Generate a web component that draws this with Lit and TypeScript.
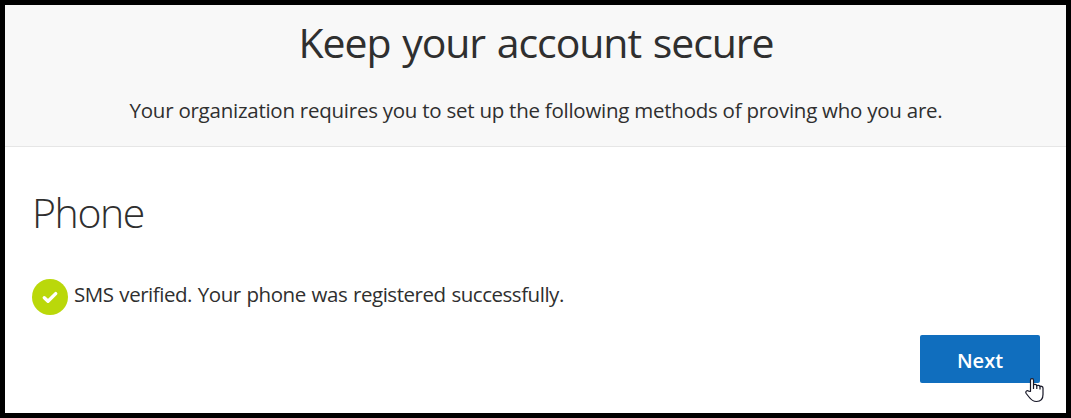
import { LitElement, html, css } from "lit";
import { customElement } from "lit/decorators.js";

@customElement("app-root")
class AppRoot extends LitElement {
  static styles = css`
    :host { display: block; font-family: "Open Sans", "Noto Sans", sans-serif; color: #2f2f2f; }
    .frame { box-sizing: border-box; width: 1071px; height: 418px; border: 5px solid #000; background: #fff; position: relative; overflow: hidden; }
    .head { box-sizing: border-box; height: 142px; background: #f8f8f8; border-bottom: 1px solid #e6e6e6; text-align: center; padding: 9px 0 0 1px; }
    h1, h2, p { margin: 0; font-weight: 400; white-space: nowrap; }
    h1 { font-size: 41px; line-height: 56px; letter-spacing: -1.04px; word-spacing: 2px; }
    .lead { font-size: 20.5px; line-height: 28px; margin-top: 26px; letter-spacing: -0.25px; }
    .body { padding: 37px 26px 0 27px; }
    h2 { font-size: 41px; line-height: 56px; font-weight: 300; letter-spacing: -1.4px; }
    .status { display: flex; gap: 6px; margin-top: 39px; font-size: 20.5px; line-height: 30px; letter-spacing: -0.47px; word-spacing: 1px; }
    .status svg { flex: none; }
    .actions { display: flex; justify-content: flex-end; margin-top: 20px; }
    button { width: 120px; height: 48px; border: 0; border-radius: 2px; background: #106ebe; color: #fff; font: 600 20px "Open Sans", "Noto Sans", sans-serif; padding: 3px 0 0; }
    .cursor { position: absolute; left: 1020px; top: 372px; }
  `;
  render() {
    return html`<main class="frame">
      <header class="head"><h1>Keep your account secure</h1><p class="lead">Your organization requires you to set up the following methods of proving who you are.</p></header>
      <section class="body">
        <h2>Phone</h2>
        <div class="status">
          <svg width="36" height="36" viewBox="0 0 36 36"><circle cx="18" cy="18" r="18" fill="#bad80a"/><path d="M12.3 18.7l3.7 3.5 7.7-7.6" fill="none" stroke="#fff" stroke-width="3.4" stroke-linecap="round" stroke-linejoin="round"/></svg>
          <p>SMS verified. Your phone was registered successfully.</p>
        </div>
        <div class="actions"><button>Next</button></div>
      </section>
      <svg class="cursor" width="20" height="26" viewBox="0 0 20 26"><path d="M5.5 14.5V3.2C5.5 1 8.5 1 8.5 3.2V8c.3-1 3-1 3.300.8.4-.8 3-.7 3.200.8.5-.8 3-.4 3 1.400v6.500c0 4.500-2.500 7-6.500 7-3.500 0-5.500-1.700-7.500-4.500L1.200 16.500c-1.200-2 .8-3.500 2.400-2.400z" fill="#fff" stroke="#151525" stroke-width="1.200" stroke-linejoin="round"/><path d="M8.500 8v4M11.800 8.800v3.200M15 9.600v2.900" fill="none" stroke="#151525" stroke-width="1.200"/></svg>
    </main>`;
  }
}
